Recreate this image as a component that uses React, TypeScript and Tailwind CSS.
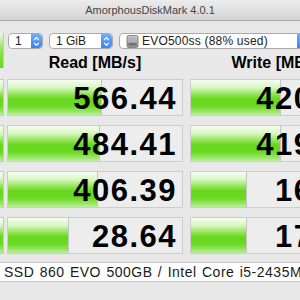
import React from 'react';

type Row = { read: string; readPct: number; write: string; writePct: number };

const ROWS: Row[] = [
  { read: '566.44', readPct: 54, write: '420.38', writePct: 52 },
  { read: '484.41', readPct: 53, write: '419.63', writePct: 52 },
  { read: '406.39', readPct: 52, write: '16.94', writePct: 32 },
  { read: '28.64', readPct: 35, write: '17.33', writePct: 32 },
];

const barGradient =
  'bg-[linear-gradient(to_bottom,#f6fdf2_0%,#d6f6bf_22%,#8fe352_42%,#66d81c_55%,#6cda24_75%,#9fe86f_92%,#bdf0a0_100%)]';

function Stepper() {
  return (
    <div className="w-[11px] self-stretch rounded-r-[4px] bg-[linear-gradient(to_bottom,#72adf7,#3a83ef)] flex items-center justify-center">
      <svg width="7" height="11" viewBox="0 0 7 11" fill="none">
        <path d="M1.2 4 L3.5 1.6 L5.8 4" stroke="white" strokeWidth="1.2" />
        <path d="M1.2 7 L3.5 9.4 L5.8 7" stroke="white" strokeWidth="1.2" />
      </svg>
    </div>
  );
}

function DiskIcon() {
  return (
    <svg width="13" height="13" viewBox="0 0 13 13" className="shrink-0">
      <defs>
        <linearGradient id="dk" x1="0" y1="0" x2="0" y2="1">
          <stop offset="0" stopColor="#c9c9c9" />
          <stop offset="1" stopColor="#8e8e8e" />
        </linearGradient>
      </defs>
      <rect x="1" y="0.5" width="11" height="12" rx="1.5" fill="url(#dk)" stroke="#777" strokeWidth="0.8" />
      <rect x="2.5" y="8" width="8" height="2.5" rx="0.5" fill="#6f6f6f" />
      <rect x="3" y="2.5" width="7" height="4" rx="1" fill="#b3b3b3" />
    </svg>
  );
}

function Cell({ value, pct }: { value: string; pct: number }) {
  return (
    <div className="relative w-[176px] h-[37px] shrink-0 border border-[#cdcdcd] bg-[#ededed] overflow-hidden">
      <div
        className={`absolute left-0 top-0 bottom-0 ${barGradient} border-r border-[#c4c4c4]`}
        style={{ width: `${pct}%` }}
      />
      <div className="relative h-full flex items-center justify-end pr-[5px] pt-[2px] text-[31px] font-bold tracking-[1.5px] text-black leading-none">
        {value}
      </div>
    </div>
  );
}

export default function App() {
  return (
    <div
      className="w-[300px] h-[300px] overflow-hidden bg-[#e8e8e8] flex flex-col"
      style={{ fontFamily: '"Liberation Sans", Arial, sans-serif' }}
    >
      {/* Title bar */}
      <div className="h-[21px] shrink-0 bg-[linear-gradient(to_bottom,#ececec,#d4d4d4)] border-b border-[#a8a8a8] flex items-center justify-center">
        <span className="text-[11px] text-[#444]">AmorphousDiskMark 4.0.1</span>
      </div>

      <div className="flex gap-[3px] pt-[12px]">
        {/* Left buttons (cut off) */}
        <div className="w-[4px] shrink-0 flex flex-col">
          <div className="h-[35px] bg-[linear-gradient(to_bottom,#e9f9df,#8fe352_50%,#66d81c)] border-r border-[#c8c8c8]" />
          <div className="h-[11px]" />
          {ROWS.map((_, i) => (
            <div
              key={i}
              className={`h-[37px] ${barGradient} border-r border-y border-[#c8c8c8] ${i < 3 ? 'mb-[9px]' : ''}`}
            />
          ))}
        </div>

        <div className="flex flex-col min-w-0">
          {/* Selectors */}
          <div className="flex gap-[6px] h-[16px] pl-[1px] text-[12px] text-[#222]">
            <div className="flex w-[35px] shrink-0 bg-white border border-[#ababab] rounded-[4px]">
              <div className="flex-1 flex items-center pl-[6px]">1</div>
              <Stepper />
            </div>
            <div className="flex w-[64px] shrink-0 bg-white border border-[#ababab] rounded-[4px]">
              <div className="flex-1 flex items-center pl-[6px]">1 GiB</div>
              <Stepper />
            </div>
            <div className="flex w-[190px] shrink-0 bg-white border border-[#ababab] rounded-[4px]">
              <div className="flex-1 flex items-center gap-[3px] pl-[6px]">
                <DiskIcon />
                <span className="tracking-[0.2px]">EVO500ss (88% used)</span>
              </div>
              <Stepper />
            </div>
          </div>

          {/* Column headers */}
          <div className="flex gap-[7px] h-[30px] items-center pb-[2px]">
            <div className="w-[176px] shrink-0 text-center text-[16px] font-bold text-black">Read [MB/s]</div>
            <div className="w-[176px] shrink-0 text-center text-[16px] font-bold text-black whitespace-nowrap">Write [MB/s]</div>
          </div>

          {/* Result rows */}
          <div className="flex flex-col gap-[9px]">
            {ROWS.map((r, i) => (
              <div key={i} className="flex gap-[7px]">
                <Cell value={r.read} pct={r.readPct} />
                <Cell value={r.write} pct={r.writePct} />
              </div>
            ))}
          </div>
        </div>
      </div>

      {/* Info line */}
      <div className="mt-[8px] h-[20px] shrink-0 bg-white border-y border-[#c6c6c6] flex items-center">
        <div className="w-[2px] h-[12px] bg-[#9cc3ee]" />
        <span className="pl-[4px] text-[14px] tracking-[0.5px] [word-spacing:1px] text-[#1a1a1a] whitespace-nowrap">
          SSD 860 EVO 500GB / Intel Core i5-2435M
        </span>
      </div>
      <div className="flex-1 bg-[#e8e8e8]" />
    </div>
  );
}
